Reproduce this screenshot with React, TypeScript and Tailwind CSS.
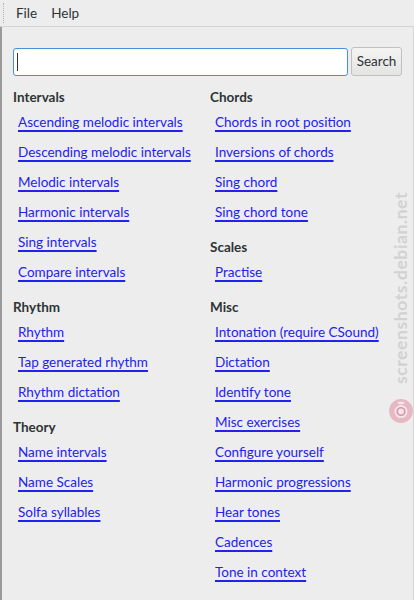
import type { ReactNode } from "react";

type Section = { title: string; links: string[] };

const leftSections: Section[] = [
  {
    title: "Intervals",
    links: [
      "Ascending melodic intervals",
      "Descending melodic intervals",
      "Melodic intervals",
      "Harmonic intervals",
      "Sing intervals",
      "Compare intervals",
    ],
  },
  { title: "Rhythm", links: ["Rhythm", "Tap generated rhythm", "Rhythm dictation"] },
  { title: "Theory", links: ["Name intervals", "Name Scales", "Solfa syllables"] },
];

const rightSections: Section[] = [
  {
    title: "Chords",
    links: ["Chords in root position", "Inversions of chords", "Sing chord", "Sing chord tone"],
  },
  { title: "Scales", links: ["Practise"] },
  {
    title: "Misc",
    links: [
      "Intonation (require CSound)",
      "Dictation",
      "Identify tone",
      "Misc exercises",
      "Configure yourself",
      "Harmonic progressions",
      "Hear tones",
      "Cadences",
      "Tone in context",
    ],
  },
];

function SectionBlock({ section }: { section: Section }) {
  return (
    <div className="mb-[10px]">
      <div className="flex h-[20px] items-center text-[13.5px] font-bold text-[#2e3436]">{section.title}</div>
      {section.links.map((link) => (
        <div key={link} className="flex h-[30px] items-center pl-[5px]">
          <a
            href="#"
            className="text-[13.5px] text-[#2222f0] underline decoration-[1.5px] underline-offset-[3px]"
          >
            {link}
          </a>
        </div>
      ))}
    </div>
  );
}

function Column({ children, className }: { children: ReactNode; className?: string }) {
  return <div className={className}>{children}</div>;
}

export default function App() {
  return (
    <div
      className="relative h-[600px] w-[414px] overflow-hidden bg-[#ededed] text-[#2e3436]"
      style={{ fontFamily: "Lato, 'Open Sans', sans-serif" }}
    >
      {/* menu bar */}
      <div className="flex h-[27px] items-center border-b border-[#d4d4d1] text-[13.5px]">
        <div className="ml-[3px] h-[20px] w-[2px] border-l border-dotted border-[#b0b0b0]" />
        <span className="ml-[11px]">File</span>
        <span className="ml-[14px]">Help</span>
      </div>

      <div className="flex h-[573px] border-l-2 border-r border-l-[#9a9a9a] border-r-[#d8d8d8]">
        <div className="flex-1 pl-[11px] pt-[20px]">
          {/* search row */}
          <div className="flex items-center gap-[3px]">
            <div className="flex h-[28px] w-[335px] items-center rounded-[3px] border border-[#4a90d9] bg-white pl-[3px]">
              <div className="h-[18px] w-px bg-[#2e3436]" />
            </div>
            <button className="h-[29px] w-[51px] rounded-[3px] border border-[#c0c0bd] bg-gradient-to-b from-[#f4f4f4] to-[#e4e4e2] text-[13.5px] text-[#2e3436]">
              Search
            </button>
          </div>

          <div className="mt-[11px] flex">
            <Column className="w-[197px]">
              {leftSections.map((s) => (
                <SectionBlock key={s.title} section={s} />
              ))}
            </Column>
            <Column className="flex-1">
              {rightSections.map((s) => (
                <SectionBlock key={s.title} section={s} />
              ))}
            </Column>
          </div>
        </div>
      </div>

      {/* watermark */}
      <div className="absolute left-[401px] top-[288px] -translate-x-1/2 -translate-y-1/2 -rotate-90 whitespace-nowrap text-[17.5px] font-bold tracking-[0.6px] text-[#d2d2d2]">
        screenshots.debian.net
      </div>
      <svg className="absolute left-[388px] top-[398px]" width="26" height="26" viewBox="0 0 24 24">
        <circle cx="12" cy="12" r="11" fill="#e6b8c4" />
        <circle cx="12" cy="12.5" r="6" fill="#f4e6ea" />
        <circle cx="12" cy="12.5" r="3.5" fill="none" stroke="#d896a8" strokeWidth="1.6" />
        <rect x="9" y="3.5" width="6" height="2" rx="1" fill="#f4e6ea" />
      </svg>
    </div>
  );
}
